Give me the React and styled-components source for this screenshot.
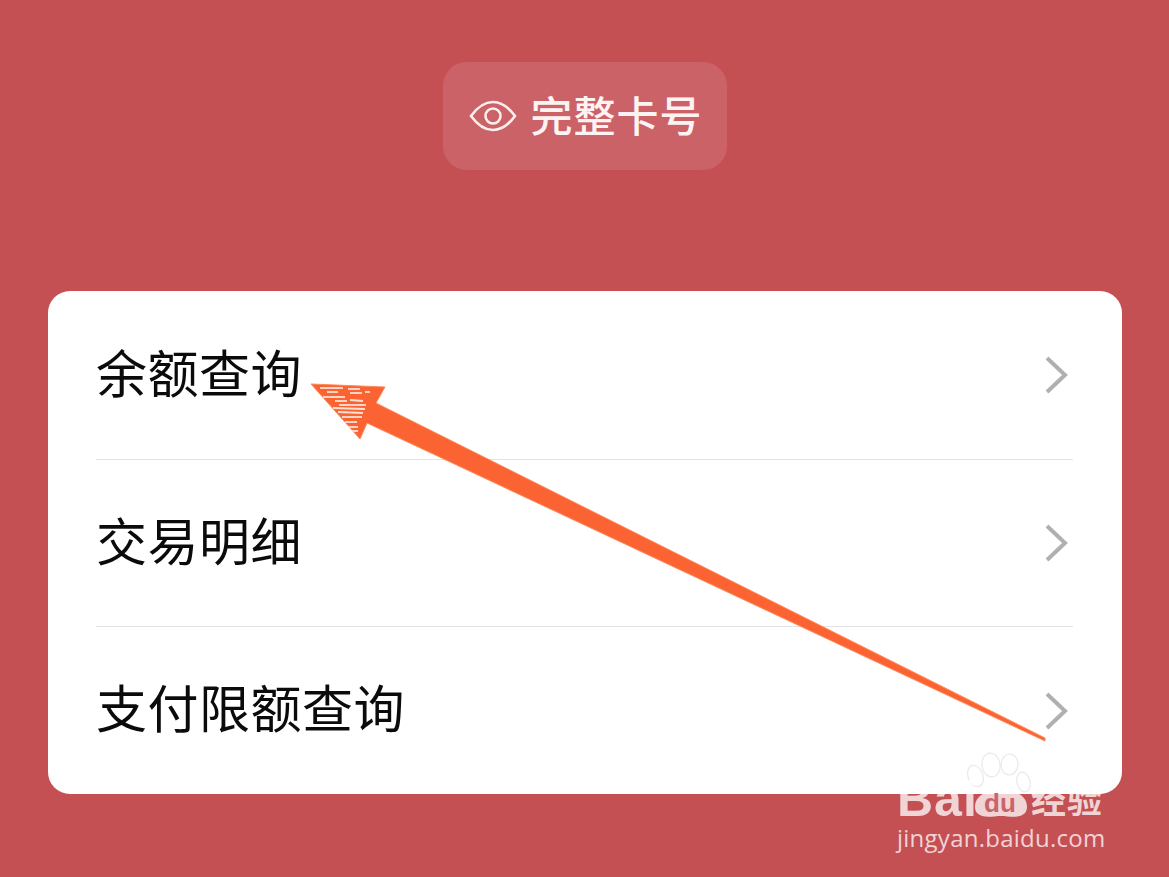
import React from 'react'
import styled, { createGlobalStyle } from 'styled-components'

const GlobalStyle = createGlobalStyle`
  html, body {
    margin: 0;
    padding: 0;
    background: #c55053;
  }
`

const Page = styled.div`
  position: relative;
  width: 1169px;
  height: 877px;
  overflow: hidden;
  box-sizing: border-box;
  padding: 62px 47px 0 48px;
  display: flex;
  flex-direction: column;
  align-items: center;
  background: #c55053;
  font-family: "Noto Sans CJK SC", "Liberation Sans", sans-serif;
`

const CardButton = styled.div`
  width: 284px;
  height: 108px;
  box-sizing: border-box;
  padding: 0 0 0 26px;
  display: flex;
  align-items: center;
  gap: 14px;
  border-radius: 24px;
  background: #cb6267;
  color: #fdf3f3;
  font-size: 42px;
  font-weight: 500;
  letter-spacing: 1px;
  margin-right: 1px;
`

const ButtonLabel = styled.span`
  line-height: 1;
  margin-bottom: 4px;
`

const Menu = styled.div`
  margin-top: 121px;
  width: 100%;
  height: 503px;
  box-sizing: border-box;
  padding: 1px 49px 0 48px;
  background: #fff;
  border-radius: 22px;
  display: flex;
  flex-direction: column;
`

const Row = styled.div`
  flex: 1;
  display: flex;
  align-items: center;
  justify-content: space-between;
  border-top: ${p => (p.$first ? 'none' : '1px solid #e3e3e3')};
  font-size: 51px;
  letter-spacing: 0.5px;
  color: #0b0b0b;
`

const RowLabel = styled.span`
  line-height: 1;
  margin-bottom: 8px;
`

const Chevron = styled.svg`
  width: 26px;
  height: 40px;
  margin-right: 3px;
  flex: none;
`

const ArrowLayer = styled.svg`
  position: absolute;
  left: 0;
  top: 0;
  width: 1169px;
  height: 877px;
  pointer-events: none;
`

const Watermark = styled.div`
  position: absolute;
  left: 897px;
  top: 750px;
  width: 215px;
  color: rgba(255, 255, 255, 0.76);
`

const Paw = styled.svg`
  position: absolute;
  left: 0;
  top: 0;
  width: 215px;
  height: 70px;
`

const BrandRow = styled.div`
  position: relative;
  height: 70px;
`

const BrandName = styled.span`
  position: absolute;
  left: 0;
  top: 29px;
  font-family: "Liberation Sans", sans-serif;
  font-size: 50px;
  line-height: 40px;
  font-weight: 700;
  letter-spacing: 1px;
`

const BrandDu = styled.span`
  position: absolute;
  left: 87px;
  top: 41px;
  font-family: "Liberation Sans", sans-serif;
  font-size: 26px;
  line-height: 24px;
  font-weight: 700;
  color: #c9656a;
`

const BrandCn = styled.span`
  position: absolute;
  left: 134px;
  top: 26px;
  font-size: 35px;
  line-height: 44px;
  font-weight: 700;
  letter-spacing: 1px;
  white-space: nowrap;
`

const Domain = styled.div`
  font-family: "Open Sans", "Liberation Sans", sans-serif;
  font-size: 24px;
  line-height: 32px;
  margin-top: 2px;
  letter-spacing: 0.25px;
  white-space: nowrap;
`

const hatch = [
  [320, 388, 343, 388], [348, 389, 360, 389], [327, 392, 338, 392], [350, 393, 362, 393],
  [365, 392, 370, 392], [323, 397, 345, 397], [335, 401, 347, 401], [350, 400, 363, 401],
  [339, 405, 366, 405], [333, 408, 365, 409], [338, 412, 363, 413], [342, 417, 362, 417],
  [345, 422, 357, 422], [348, 427, 358, 427], [352, 431, 358, 431],
]

function Arrow() {
  return (
    <ArrowLayer viewBox="0 0 1169 877">
      <path d="M311 384 L385 387 L376 403 L1045 738 L1045 741 L367 423 L360 439 Z" fill="#fb6432" stroke="#fb8a5c" strokeWidth="1" />
      {hatch.map(([x1, y1, x2, y2]) => (
        <line key={`${x1}-${y1}`} x1={x1} y1={y1} x2={x2} y2={y2} stroke="#fde0d2" strokeWidth="1.8" />
      ))}
    </ArrowLayer>
  )
}

function Brand() {
  return (
    <Watermark>
      <BrandRow>
        <Paw viewBox="0 0 215 70">
          <g fill="none" stroke="rgba(225,225,225,0.75)" strokeWidth="1.2">
            <ellipse cx="78.5" cy="26" rx="7.5" ry="11" transform="rotate(-20 78.5 26)" />
            <ellipse cx="94" cy="15" rx="9" ry="12" transform="rotate(-8 94 15)" />
            <ellipse cx="112.5" cy="14.5" rx="8.5" ry="10.5" transform="rotate(6 112.5 14.5)" />
            <ellipse cx="126.5" cy="32" rx="6.5" ry="10" transform="rotate(-14 126.5 32)" />
          </g>
          <path d="M86 44 C94 40 114 40 122 44 C130 48 132 58 128 63 C122 69 112 66 104 66 C96 66 86 69 80 63 C76 58 78 48 86 44 Z" fill="rgba(255,255,255,0.76)" />
        </Paw>
        <BrandName>Bai</BrandName>
        <BrandDu>du</BrandDu>
        <BrandCn>经验</BrandCn>
      </BrandRow>
      <Domain>jingyan.baidu.com</Domain>
    </Watermark>
  )
}

function RowChevron() {
  return (
    <Chevron viewBox="0 0 26 40">
      <path d="M3 3 L21 20 L3 37" fill="none" stroke="#b0b0b0" strokeWidth="4" />
    </Chevron>
  )
}

export default function App() {
  const rows = ['余额查询', '交易明细', '支付限额查询']
  return (
    <Page>
      <GlobalStyle />
      <CardButton>
        <svg width="48" height="32" viewBox="0 0 48 32">
          <path d="M2 16 C10 5 17 2 24 2 C31 2 38 5 46 16 C38 27 31 30 24 30 C17 30 10 27 2 16 Z" fill="none" stroke="#fbeeee" strokeWidth="2.6" />
          <circle cx="24" cy="16" r="7.5" fill="none" stroke="#fbeeee" strokeWidth="2.6" />
        </svg>
        <ButtonLabel>完整卡号</ButtonLabel>
      </CardButton>
      <Menu>
        {rows.map((label, i) => (
          <Row key={label} $first={i === 0}>
            <RowLabel>{label}</RowLabel>
            <RowChevron />
          </Row>
        ))}
      </Menu>
      <Arrow />
      <Brand />
    </Page>
  )
}
